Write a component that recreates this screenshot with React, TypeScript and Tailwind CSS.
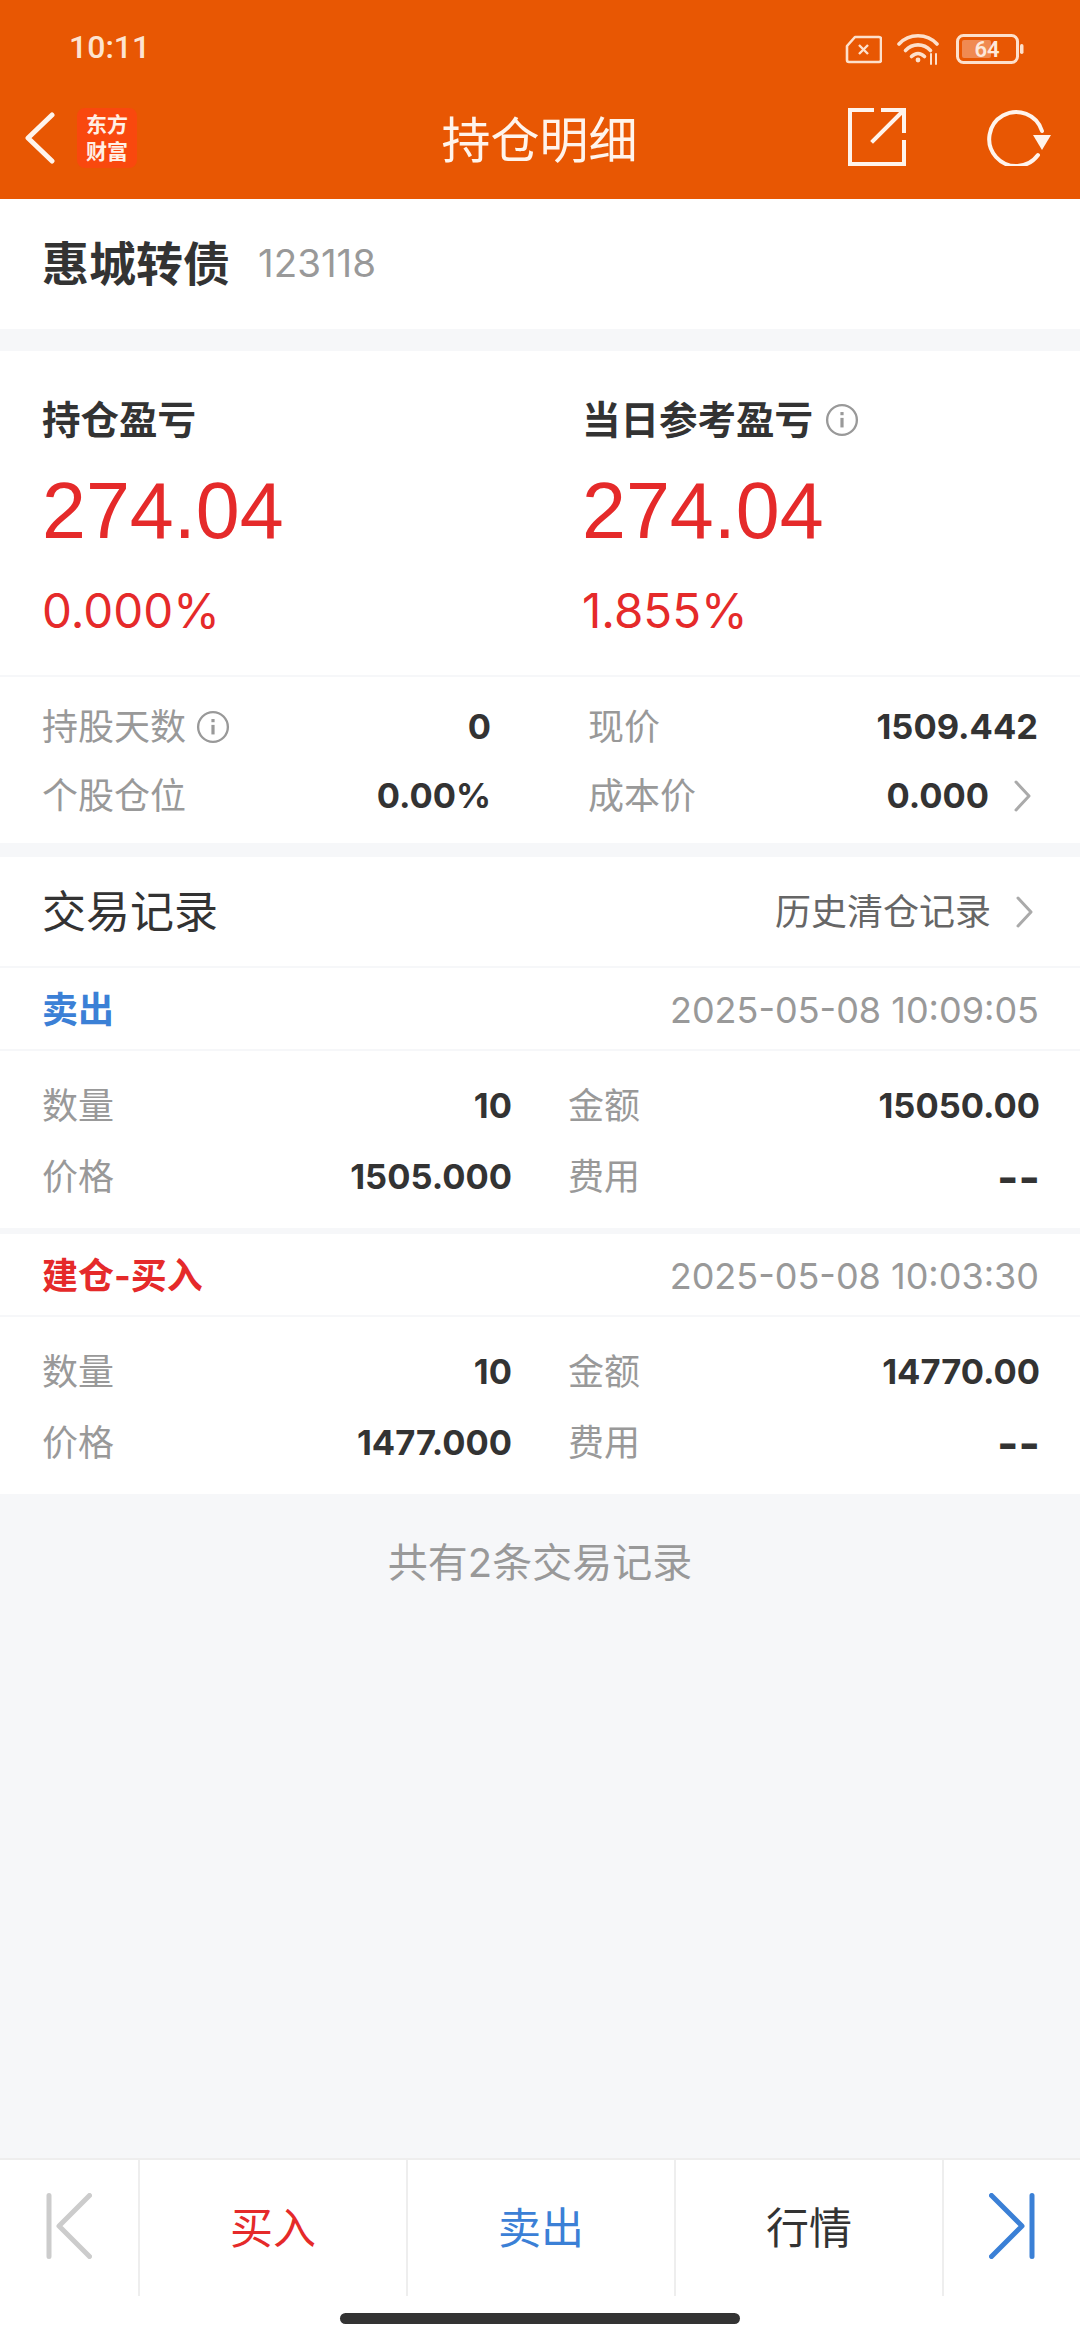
const RED = "text-[#e52a2a]";

function Info({ size = 34 }: { size?: number }) {
  return (
    <svg width={size} height={size} viewBox="0 0 32 32" fill="none" stroke="#999999" strokeWidth="2.2">
      <circle cx="16" cy="16" r="14" />
      <path d="M16 14v9" strokeWidth="3" />
      <path d="M16 8.5v3" strokeWidth="3" />
    </svg>
  );
}

function Chevron() {
  return (
    <svg width="20" height="32" viewBox="0 0 20 32" fill="none" stroke="#aaaaaa" strokeWidth="3" strokeLinecap="round" strokeLinejoin="round">
      <path d="M3 2l13 14L3 30" />
    </svg>
  );
}

function StatusBar() {
  return (
    <div className="flex h-[92px] items-end justify-between pb-[27px] pl-[69px] pr-[56px]">
      <span className="font-['Roboto'] text-[32px] leading-[36px] font-medium text-[#fde3d0]">10:11</span>
      <div className="flex items-center gap-[15px]">
        <svg width="37" height="29" viewBox="0 0 37 29" fill="none" stroke="#fde0cc" strokeWidth="2.6" strokeLinejoin="round">
          <path d="M10 2h24a2 2 0 0 1 2 2v21a2 2 0 0 1-2 2H4a2 2 0 0 1-2-2V11z" />
          <path d="M14 10l9 9M23 10l-9 9" strokeWidth="2.4" />
        </svg>
        <svg width="44" height="32" viewBox="0 0 44 32" fill="none" stroke="#fde0cc" strokeWidth="3.6" strokeLinecap="round">
          <path d="M2 11C12 0 30 0 40 11" />
          <path d="M8.5 17.5c7-7.5 18-7.5 25 0" />
          <path d="M14.5 23.5c4-4 9-4 13 0" />
          <circle cx="21" cy="27" r="2.4" fill="#fde0cc" stroke="none" />
          <path d="M34 21v10M39 21v10" strokeWidth="2" />
        </svg>
        <svg width="68" height="30" viewBox="0 0 68 30" fill="none">
          <rect x="1.5" y="1.5" width="60" height="27" rx="6" stroke="#fde0cc" strokeWidth="3" />
          <rect x="6" y="6" width="29" height="18" rx="2" fill="#f08a52" />
          <rect x="64" y="10" width="3.5" height="10" rx="1.7" fill="#fde0cc" />
          <text x="31" y="23" textAnchor="middle" fontSize="22" fontWeight="600" fill="#fde9dc" fontFamily="Roboto, sans-serif">64</text>
        </svg>
      </div>
    </div>
  );
}

function NavBar() {
  return (
    <div className="flex h-[107px] items-start justify-between pt-[16px] pl-[24px] pr-[28px]">
      <div className="flex w-[300px] items-center gap-[21px]">
        <svg width="32" height="52" viewBox="0 0 32 52" fill="none" stroke="#fff4ec" strokeWidth="5" strokeLinecap="round" strokeLinejoin="round">
          <path d="M28 3L4 26l24 23" />
        </svg>
        <div className="flex h-[60px] w-[60px] flex-col items-center justify-center rounded-[8px] bg-[#f9480e] text-[21px] leading-[27px] font-bold text-[#fff0e6]">
          <span>东方</span>
          <span>财富</span>
        </div>
      </div>
      <h1 className="ml-[3px] pt-[3px] text-[49px] leading-[60px] font-normal text-[#fff4ec]">持仓明细</h1>
      <div className="flex w-[300px] items-center justify-end gap-[80px]">
        <svg width="58" height="58" viewBox="0 0 58 58" fill="none" stroke="#fff4ec" strokeWidth="4" strokeLinecap="square">
          <path d="M24 2H2v54h54V34" />
          <path d="M25 33L55 3M35 2h21v21" />
        </svg>
        <svg width="66" height="58" viewBox="0 0 66 58" fill="none" stroke="#fff4ec" strokeWidth="4" strokeLinecap="round">
          <path d="M52 47A27 27 0 1 1 56 23" />
          <path d="M47 27h18l-9 15z" fill="#fff4ec" stroke="none" />
        </svg>
      </div>
    </div>
  );
}

function Metric({ title, value, percent, info }: { title: string; value: string; percent: string; info?: boolean }) {
  return (
    <div className="flex-1">
      <div className="flex h-[48px] items-center gap-[12px] text-[38.5px] leading-[48px] font-bold text-[#333333]">
        {title}
        {info ? <Info /> : null}
      </div>
      <div className={`mt-[23px] h-[88px] font-['Liberation_Sans'] text-[79px] leading-[88px] ${RED}`}>{value}</div>
      <div className={`mt-[26px] h-[60px] text-[47.5px] leading-[60px] ${RED}`}>{percent}</div>
    </div>
  );
}

function PositionRow({
  leftLabel,
  leftValue,
  rightLabel,
  rightValue,
  info,
  chevron,
}: {
  leftLabel: string;
  leftValue: string;
  rightLabel: string;
  rightValue: string;
  info?: boolean;
  chevron?: boolean;
}) {
  return (
    <div className="flex h-[69px] items-center text-[36px]">
      <div className="flex w-[450px] items-center justify-between">
        <span className="flex items-center gap-[10px] text-[#999999]">
          {leftLabel}
          {info ? <Info /> : null}
        </span>
        <span className="text-[34.5px] font-bold text-[#333333]">{leftValue}</span>
      </div>
      <div className={`ml-[97px] flex w-[451px] items-center justify-between ${chevron ? "pr-[5px]" : ""}`}>
        <span className="text-[#999999]">{rightLabel}</span>
        <span className="flex items-center gap-[24px] text-[34.5px] font-bold text-[#333333]">
          {rightValue}
          {chevron ? <Chevron /> : null}
        </span>
      </div>
    </div>
  );
}

function TradeCell({ label, value }: { label: string; value: string }) {
  return (
    <div className="flex items-center justify-between">
      <span className="text-[#999999]">{label}</span>
      {value === "--" ? (
        <span className="text-[46px] leading-none font-bold text-[#333333]">{value}</span>
      ) : (
        <span className="text-[34.5px] font-bold text-[#333333]">{value}</span>
      )}
    </div>
  );
}

function Trade({
  type,
  color,
  time,
  amount,
  total,
  price,
}: {
  type: string;
  color: string;
  time: string;
  amount: string;
  total: string;
  price: string;
}) {
  return (
    <section className="bg-white">
      <div className="flex h-[83px] items-center justify-between border-b-2 border-[#f6f7f9] pr-[41px] pl-[42px] pt-[3px] text-[36px]">
        <span className={`font-bold ${color}`}>{type}</span>
        <span className="text-[#999999]">{time}</span>
      </div>
      <div className="grid h-[177px] grid-cols-[470px_472px] content-center gap-x-[56px] gap-y-[1px] pr-[40px] pl-[42px] pt-[4px] text-[36px] leading-[70px]">
        <TradeCell label="数量" value={amount} />
        <TradeCell label="金额" value={total} />
        <TradeCell label="价格" value={price} />
        <TradeCell label="费用" value="--" />
      </div>
    </section>
  );
}

function BottomBar() {
  const cell = "flex w-[268px] items-center justify-center border-l-2 border-[#eeeeee] text-[43px]";
  return (
    <footer className="shrink-0 bg-white">
      <div className="flex h-[138px] border-t-2 border-[#eeeeee]">
        <div className="flex w-[138px] items-center justify-center pb-[4px]">
          <svg width="46" height="66" viewBox="0 0 46 66" fill="none" stroke="#cccccc" strokeWidth="5" strokeLinecap="round" strokeLinejoin="round">
            <path d="M3 2.5v61M43.5 2.5L13 33l30.5 30.5" />
          </svg>
        </div>
        <div className={`${cell} ${RED}`}>买入</div>
        <div className={`${cell} text-[#3b80d6]`}>卖出</div>
        <div className={`${cell} text-[#333333]`}>行情</div>
        <div className="flex flex-1 items-center justify-center border-l-2 border-[#eeeeee] pb-[4px]">
          <svg width="46" height="66" viewBox="0 0 46 66" fill="none" stroke="#3b80d6" strokeWidth="5" strokeLinecap="round" strokeLinejoin="round">
            <path d="M43 2.5v61M2.5 2.5L33 33 2.5 63.5" />
          </svg>
        </div>
      </div>
      <div className="flex h-[44px] justify-center pt-[17px]">
        <div className="h-[11px] w-[400px] rounded-full bg-[#333333]" />
      </div>
    </footer>
  );
}

export default function App() {
  return (
    <div className="flex h-[2340px] w-[1080px] flex-col bg-[#f6f7f9] font-[Inter,'Noto_Sans_CJK_SC',sans-serif]">
      <header className="h-[199px] shrink-0 bg-[#e85703]">
        <StatusBar />
        <NavBar />
      </header>

      <div className="flex h-[130px] items-center gap-[28px] bg-white px-[42px]">
        <span className="text-[47px] font-bold text-[#333333]">惠城转债</span>
        <span className="text-[38.5px] text-[#999999]">123118</span>
      </div>

      <section className="mt-[22px] bg-white">
        <div className="flex h-[326px] border-b-2 border-[#f6f7f9] pt-[45px] pl-[42px] pr-[42px]">
          <div className="w-[540px]">
            <Metric title="持仓盈亏" value="274.04" percent="0.000%" />
          </div>
          <Metric title="当日参考盈亏" value="274.04" percent="1.855%" info />
        </div>
        <div className="h-[166px] px-[42px] pt-[15px]">
          <PositionRow leftLabel="持股天数" leftValue="0" rightLabel="现价" rightValue="1509.442" info />
          <PositionRow leftLabel="个股仓位" leftValue="0.00%" rightLabel="成本价" rightValue="0.000" chevron />
        </div>
      </section>

      <section className="mt-[14px] flex h-[111px] items-center justify-between border-b-2 border-[#f6f7f9] bg-white pr-[45px] pl-[42px]">
        <span className="text-[44px] text-[#333333]">交易记录</span>
        <span className="flex items-center gap-[24px] text-[36px] text-[#666666]">
          历史清仓记录
          <Chevron />
        </span>
      </section>

      <Trade type="卖出" color="text-[#3b80d6]" time="2025-05-08 10:09:05" amount="10" total="15050.00" price="1505.000" />
      <div className="mt-[6px]">
        <Trade type="建仓-买入" color={RED} time="2025-05-08 10:03:30" amount="10" total="14770.00" price="1477.000" />
      </div>

      <div className="flex flex-1 justify-center pt-[44px] text-[40px] leading-[50px] text-[#999999]">
        共有2条交易记录
      </div>

      <BottomBar />
    </div>
  );
}
